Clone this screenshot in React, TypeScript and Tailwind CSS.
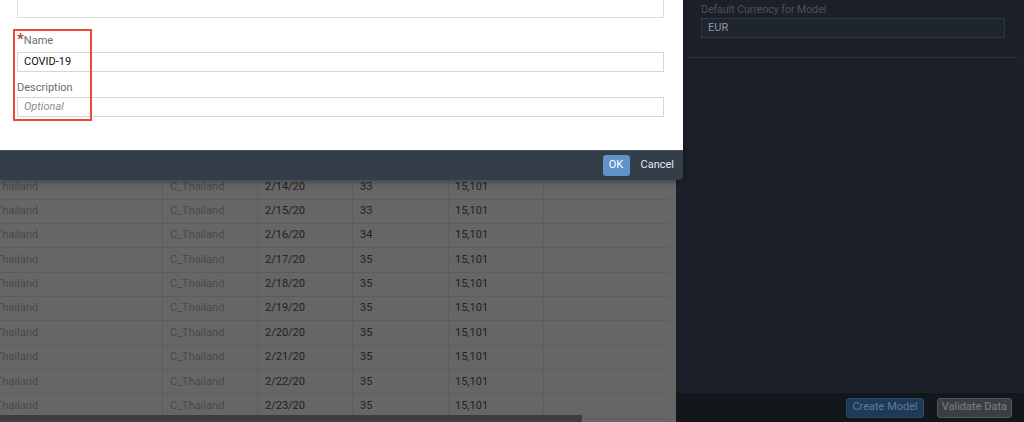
import React from 'react';

const rows = [
  { date: '2/13/20', cases: '33' },
  { date: '2/14/20', cases: '33' },
  { date: '2/15/20', cases: '33' },
  { date: '2/16/20', cases: '34' },
  { date: '2/17/20', cases: '35' },
  { date: '2/18/20', cases: '35' },
  { date: '2/19/20', cases: '35' },
  { date: '2/20/20', cases: '35' },
  { date: '2/21/20', cases: '35' },
  { date: '2/22/20', cases: '35' },
  { date: '2/23/20', cases: '35' },
];

function DataTable() {
  return (
    <div className="relative w-[676px] h-full bg-[#666666] overflow-hidden">
      <div className="-ml-[11px] pt-[151px] w-[680px]">
        {rows.map((r) => (
          <div key={r.date} className="flex h-[24.35px] items-center border-b border-[#5d5d5d] text-[11px]">
            <div className="w-[174px] h-full flex items-center px-[7px] border-r border-[#5d5d5d] text-[#494949]">Thailand</div>
            <div className="w-[95px] h-full flex items-center px-[7px] border-r border-[#5d5d5d] text-[#494949]">C_Thailand</div>
            <div className="w-[95px] h-full flex items-center px-[7px] border-r border-[#5d5d5d] text-[#222]">{r.date}</div>
            <div className="w-[96px] h-full flex items-center px-[7px] border-r border-[#5d5d5d] text-[#222]">{r.cases}</div>
            <div className="w-[95px] h-full flex items-center px-[6px] border-r border-[#5d5d5d] text-[#222]">15,101</div>
            <div className="w-[123px] h-full" />
          </div>
        ))}
      </div>
      {/* horizontal scrollbar */}
      <div className="absolute left-0 bottom-0 w-[582px] h-[7px] bg-[#3d3d3d]" />
    </div>
  );
}

function SidePanel() {
  return (
    <div className="flex-1 h-full flex flex-col bg-[#1b2029]">
      <div className="flex-1 pl-[25px] pr-[19px]">
        <div className="text-[10.5px] leading-[12px] text-[#4a525c] pt-[4px] h-[18px]">Default Currency for Model</div>
        <div className="h-[20px] border border-[#2e3640] bg-[#1e252e] flex items-center px-[6px] text-[11px] text-[#8e959c]">EUR</div>
        <div className="mt-[19px] -ml-[13px] mr-[-12px] border-t border-[#2c333c]" />
      </div>
      <div className="h-[29px] bg-[#13171c] flex items-center justify-end gap-[13px] pr-[12px]">
        <button className="h-[20px] px-[5px] rounded-[3px] bg-[#1e3a57] border border-[#2b4a6a] text-[11px] text-[#5e7c99]">Create Model</button>
        <button className="h-[20px] px-[4px] rounded-[3px] bg-[#3b3f44] border border-[#53575c] text-[11px] text-[#7b7f84]">Validate Data</button>
      </div>
    </div>
  );
}

function Dialog() {
  return (
    <div className="absolute left-0 top-0 w-[683px] h-[180px] flex flex-col rounded-br-[4px] overflow-hidden shadow-[0_2px_6px_rgba(0,0,0,0.35)]">
      <div className="h-[150px] bg-white pl-[17px] pr-[19px] relative">
        <div className="h-[18px] border border-t-0 border-[#dcdcdc]" />
        <div className="mt-[13px] h-[21px] flex items-end text-[11px] text-[#6a6d70] leading-none pb-[6px]">
          <span className="text-[#c0392b] text-[15px] font-bold leading-none self-start mt-[1px]">*</span>
          <span>Name</span>
        </div>
        <div className="h-[20px] border border-[#d6d6d6] flex items-center px-[6px] text-[11px] text-[#111]">COVID-19</div>
        <div className="mt-[7px] h-[18px] flex items-center text-[11px] text-[#6a6d70]">Description</div>
        <div className="h-[20px] border border-[#d6d6d6] flex items-center px-[6px] text-[11px] italic text-[#8a8d90]">Optional</div>
        {/* highlight box */}
        <div className="absolute left-[13px] top-[29px] w-[79px] h-[92px] border-2 border-[#ec4a35]" />
      </div>
      <div className="flex-1 bg-[#343e48] border-t border-[#465463] flex items-center justify-end gap-[11px] pr-[9px]">
        <button className="h-[21px] w-[27px] rounded-[3px] bg-[#5f93c9] text-white text-[11px]">OK</button>
        <button className="text-[11px] text-[#e3e8ed]">Cancel</button>
      </div>
    </div>
  );
}

export default function App() {
  return (
    <div className="relative w-[1024px] h-[422px] flex overflow-hidden bg-[#1b2029]" style={{ fontFamily: 'Roboto, "Liberation Sans", Arial, sans-serif' }}>
      <DataTable />
      <SidePanel />
      <Dialog />
    </div>
  );
}
